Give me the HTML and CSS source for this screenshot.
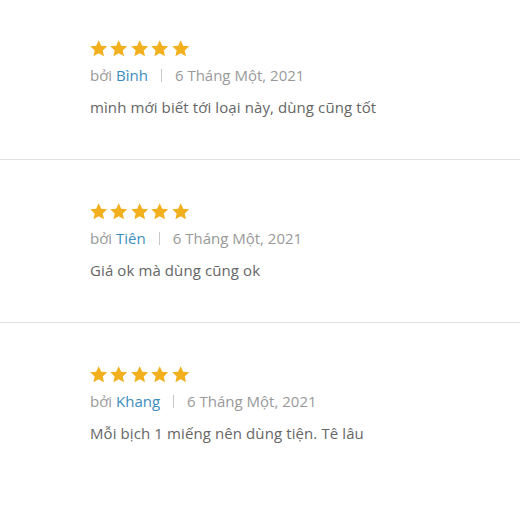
FILE: index.html
```html
<!DOCTYPE html>
<html lang="vi">
<head>
<meta charset="utf-8">
<link rel="stylesheet" href="styles.css">
</head>
<body>
<svg width="0" height="0" class="defs">
  <defs>
    <symbol id="star" viewBox="0 0 24 24">
      <path d="M12 1.6l3.2 6.9 7.5.8-5.6 5.1 1.6 7.4L12 18l-6.7 3.8 1.6-7.4-5.6-5.1 7.5-.8z"/>
    </symbol>
  </defs>
</svg>
<div class="reviews">
  <div class="review">
    <div class="stars"><svg><use href="#star"/></svg><svg><use href="#star"/></svg><svg><use href="#star"/></svg><svg><use href="#star"/></svg><svg><use href="#star"/></svg></div>
    <div class="meta"><span class="by">bởi <span class="name">Bình</span></span><span class="sep"></span><span class="date">6 Tháng Một, 2021</span></div>
    <p class="comment">mình mới biết tới loại này, dùng cũng tốt</p>
  </div>
  <div class="review">
    <div class="stars"><svg><use href="#star"/></svg><svg><use href="#star"/></svg><svg><use href="#star"/></svg><svg><use href="#star"/></svg><svg><use href="#star"/></svg></div>
    <div class="meta"><span class="by">bởi <span class="name">Tiên</span></span><span class="sep"></span><span class="date">6 Tháng Một, 2021</span></div>
    <p class="comment">Giá ok mà dùng cũng ok</p>
  </div>
  <div class="review last">
    <div class="stars"><svg><use href="#star"/></svg><svg><use href="#star"/></svg><svg><use href="#star"/></svg><svg><use href="#star"/></svg><svg><use href="#star"/></svg></div>
    <div class="meta"><span class="by">bởi <span class="name">Khang</span></span><span class="sep"></span><span class="date">6 Tháng Một, 2021</span></div>
    <p class="comment">Mỗi bịch 1 miếng nên dùng tiện. Tê lâu</p>
  </div>
</div>
</body>
</html>
```

FILE: styles.css
```css
html, body {
  margin: 0;
  padding: 0;
  background: #fff;
}
body {
  font-family: "Open Sans", "Noto Sans", sans-serif;
  font-size: 15px;
  color: #666;
}
.defs {
  position: absolute;
  width: 0;
  height: 0;
}
.review {
  padding: 42px 0 42px 89px;
  border-bottom: 1px solid #e0e0e0;
}
.review:first-child {
  padding-top: 39px;
}
.review.last {
  border-bottom: none;
}
.stars {
  display: flex;
  gap: 1px;
  height: 19px;
  fill: #f2b01e;
}
.stars svg {
  width: 19.4px;
  height: 19px;
}
.meta {
  display: flex;
  align-items: center;
  height: 20px;
  margin-top: 7px;
  padding-left: 1px;
  color: #999;
}
.name {
  color: #3b8dbd;
}
.sep {
  width: 1px;
  height: 13px;
  background: #c8c8c8;
  margin: 0 13px 0 13px;
}
.comment {
  margin: 12px 0 0 1px;
  line-height: 20px;
  color: #666;
  letter-spacing: 0.1px;
}
```
